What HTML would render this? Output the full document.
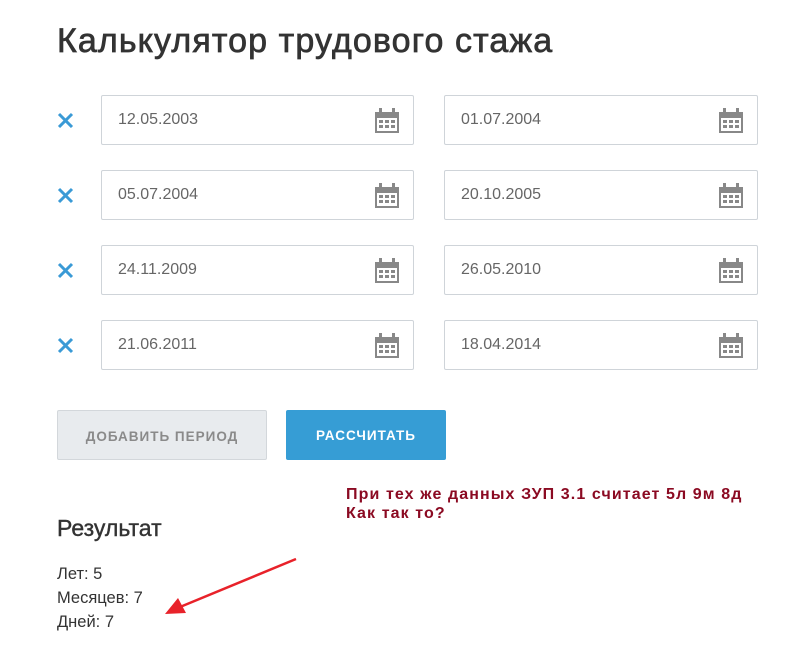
<!DOCTYPE html>
<html><head><meta charset="utf-8"><style>
body{margin:0;width:799px;height:646px;background:#fff;font-family:"Liberation Sans",sans-serif;position:relative;overflow:hidden}
.a{position:absolute}
h1{position:absolute;left:57px;top:22px;margin:0;font-size:34px;font-weight:normal;color:#333;letter-spacing:1.1px;-webkit-text-stroke:0.7px #333}
.in{position:absolute;height:50px;border:1px solid #cfd4d9;border-radius:2px;background:#fff;box-sizing:border-box}
.in span{position:absolute;left:16px;top:15px;font-size:16px;color:#666}
.in svg{position:absolute;right:14px;top:12px}
.x{position:absolute;left:57px}
.btn{position:absolute;top:410px;height:50px;border-radius:2px;font-weight:bold;font-size:13.5px;letter-spacing:1px;text-align:center;line-height:51px;box-sizing:border-box}
</style></head><body>
<h1>Калькулятор трудового стажа</h1>
<svg class="x" style="top:112px" width="17" height="17" viewBox="0 0 17 17"><path d="M2 2L15 15M15 2L2 15" stroke="#3a9ad6" stroke-width="3"/></svg>
<svg class="x" style="top:187px" width="17" height="17" viewBox="0 0 17 17"><path d="M2 2L15 15M15 2L2 15" stroke="#3a9ad6" stroke-width="3"/></svg>
<svg class="x" style="top:262px" width="17" height="17" viewBox="0 0 17 17"><path d="M2 2L15 15M15 2L2 15" stroke="#3a9ad6" stroke-width="3"/></svg>
<svg class="x" style="top:337px" width="17" height="17" viewBox="0 0 17 17"><path d="M2 2L15 15M15 2L2 15" stroke="#3a9ad6" stroke-width="3"/></svg>

<div class="in" style="left:101px;top:95px;width:313px"><span>12.05.2003</span><svg width="24" height="25" viewBox="0 0 24 25"><rect x="0" y="4" width="24" height="21" fill="#888"/><rect x="2" y="10" width="20" height="13" fill="#fff"/><rect x="4" y="0" width="3" height="7" fill="#888"/><rect x="17" y="0" width="3" height="7" fill="#888"/><g fill="#888"><rect x="4" y="12" width="4" height="3"/><rect x="10" y="12" width="4" height="3"/><rect x="16" y="12" width="4" height="3"/><rect x="4" y="17" width="4" height="3"/><rect x="10" y="17" width="4" height="3"/><rect x="16" y="17" width="4" height="3"/></g></svg></div>
<div class="in" style="left:444px;top:95px;width:314px"><span>01.07.2004</span><svg width="24" height="25" viewBox="0 0 24 25"><rect x="0" y="4" width="24" height="21" fill="#888"/><rect x="2" y="10" width="20" height="13" fill="#fff"/><rect x="4" y="0" width="3" height="7" fill="#888"/><rect x="17" y="0" width="3" height="7" fill="#888"/><g fill="#888"><rect x="4" y="12" width="4" height="3"/><rect x="10" y="12" width="4" height="3"/><rect x="16" y="12" width="4" height="3"/><rect x="4" y="17" width="4" height="3"/><rect x="10" y="17" width="4" height="3"/><rect x="16" y="17" width="4" height="3"/></g></svg></div>
<div class="in" style="left:101px;top:170px;width:313px"><span>05.07.2004</span><svg width="24" height="25" viewBox="0 0 24 25"><rect x="0" y="4" width="24" height="21" fill="#888"/><rect x="2" y="10" width="20" height="13" fill="#fff"/><rect x="4" y="0" width="3" height="7" fill="#888"/><rect x="17" y="0" width="3" height="7" fill="#888"/><g fill="#888"><rect x="4" y="12" width="4" height="3"/><rect x="10" y="12" width="4" height="3"/><rect x="16" y="12" width="4" height="3"/><rect x="4" y="17" width="4" height="3"/><rect x="10" y="17" width="4" height="3"/><rect x="16" y="17" width="4" height="3"/></g></svg></div>
<div class="in" style="left:444px;top:170px;width:314px"><span>20.10.2005</span><svg width="24" height="25" viewBox="0 0 24 25"><rect x="0" y="4" width="24" height="21" fill="#888"/><rect x="2" y="10" width="20" height="13" fill="#fff"/><rect x="4" y="0" width="3" height="7" fill="#888"/><rect x="17" y="0" width="3" height="7" fill="#888"/><g fill="#888"><rect x="4" y="12" width="4" height="3"/><rect x="10" y="12" width="4" height="3"/><rect x="16" y="12" width="4" height="3"/><rect x="4" y="17" width="4" height="3"/><rect x="10" y="17" width="4" height="3"/><rect x="16" y="17" width="4" height="3"/></g></svg></div>
<div class="in" style="left:101px;top:245px;width:313px"><span>24.11.2009</span><svg width="24" height="25" viewBox="0 0 24 25"><rect x="0" y="4" width="24" height="21" fill="#888"/><rect x="2" y="10" width="20" height="13" fill="#fff"/><rect x="4" y="0" width="3" height="7" fill="#888"/><rect x="17" y="0" width="3" height="7" fill="#888"/><g fill="#888"><rect x="4" y="12" width="4" height="3"/><rect x="10" y="12" width="4" height="3"/><rect x="16" y="12" width="4" height="3"/><rect x="4" y="17" width="4" height="3"/><rect x="10" y="17" width="4" height="3"/><rect x="16" y="17" width="4" height="3"/></g></svg></div>
<div class="in" style="left:444px;top:245px;width:314px"><span>26.05.2010</span><svg width="24" height="25" viewBox="0 0 24 25"><rect x="0" y="4" width="24" height="21" fill="#888"/><rect x="2" y="10" width="20" height="13" fill="#fff"/><rect x="4" y="0" width="3" height="7" fill="#888"/><rect x="17" y="0" width="3" height="7" fill="#888"/><g fill="#888"><rect x="4" y="12" width="4" height="3"/><rect x="10" y="12" width="4" height="3"/><rect x="16" y="12" width="4" height="3"/><rect x="4" y="17" width="4" height="3"/><rect x="10" y="17" width="4" height="3"/><rect x="16" y="17" width="4" height="3"/></g></svg></div>
<div class="in" style="left:101px;top:320px;width:313px"><span>21.06.2011</span><svg width="24" height="25" viewBox="0 0 24 25"><rect x="0" y="4" width="24" height="21" fill="#888"/><rect x="2" y="10" width="20" height="13" fill="#fff"/><rect x="4" y="0" width="3" height="7" fill="#888"/><rect x="17" y="0" width="3" height="7" fill="#888"/><g fill="#888"><rect x="4" y="12" width="4" height="3"/><rect x="10" y="12" width="4" height="3"/><rect x="16" y="12" width="4" height="3"/><rect x="4" y="17" width="4" height="3"/><rect x="10" y="17" width="4" height="3"/><rect x="16" y="17" width="4" height="3"/></g></svg></div>
<div class="in" style="left:444px;top:320px;width:314px"><span>18.04.2014</span><svg width="24" height="25" viewBox="0 0 24 25"><rect x="0" y="4" width="24" height="21" fill="#888"/><rect x="2" y="10" width="20" height="13" fill="#fff"/><rect x="4" y="0" width="3" height="7" fill="#888"/><rect x="17" y="0" width="3" height="7" fill="#888"/><g fill="#888"><rect x="4" y="12" width="4" height="3"/><rect x="10" y="12" width="4" height="3"/><rect x="16" y="12" width="4" height="3"/><rect x="4" y="17" width="4" height="3"/><rect x="10" y="17" width="4" height="3"/><rect x="16" y="17" width="4" height="3"/></g></svg></div>

<div class="btn" style="left:57px;width:210px;background:#e8ebee;border:1px solid #d3d7db;color:#8a8a8a">ДОБАВИТЬ ПЕРИОД</div>
<div class="btn" style="left:286px;width:160px;background:#369dd5;color:#fff">РАССЧИТАТЬ</div>

<div class="a" style="left:346px;top:485px;font-size:16px;line-height:19px;font-weight:bold;color:#8b0a22;letter-spacing:1.1px">При тех же данных ЗУП 3.1 считает 5л 9м 8д<br>Как так то?</div>

<div class="a" style="left:57px;top:515px;font-size:23px;color:#333;-webkit-text-stroke:0.4px #333">Результат</div>
<div class="a" style="left:57px;top:562px;font-size:16.5px;line-height:24px;color:#333">Лет: 5<br>Месяцев: 7<br>Дней: 7</div>

<svg class="a" style="left:0;top:0" width="799" height="646"><line x1="296" y1="559" x2="180" y2="607" stroke="#e8222a" stroke-width="2.5"/><polygon points="165,614 178,598 186,613" fill="#e8222a"/></svg>
</body></html>
